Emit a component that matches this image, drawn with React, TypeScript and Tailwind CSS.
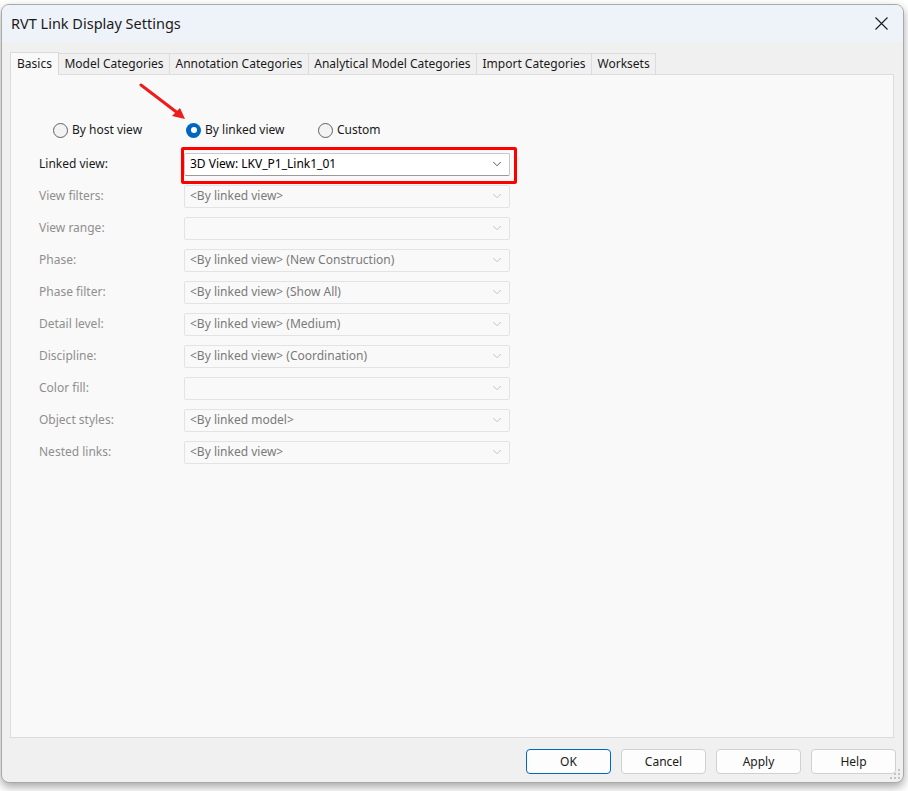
import { ChevronDown } from 'lucide-react';

const rows = [
  { label: 'View filters:', value: '<By linked view>' },
  { label: 'View range:', value: '' },
  { label: 'Phase:', value: '<By linked view> (New Construction)' },
  { label: 'Phase filter:', value: '<By linked view> (Show All)' },
  { label: 'Detail level:', value: '<By linked view> (Medium)' },
  { label: 'Discipline:', value: '<By linked view> (Coordination)' },
  { label: 'Color fill:', value: '' },
  { label: 'Object styles:', value: '<By linked model>' },
  { label: 'Nested links:', value: '<By linked view>' },
];

const tabs = [
  'Model Categories',
  'Annotation Categories',
  'Analytical Model Categories',
  'Import Categories',
  'Worksets',
];

function Radio({ label, checked }: { label: string; checked?: boolean }) {
  return (
    <div className="flex items-center gap-[4px]">
      {checked ? (
        <span className="w-[15px] h-[15px] rounded-full bg-[#0067c0] flex items-center justify-center">
          <span className="w-[6px] h-[6px] rounded-full bg-white" />
        </span>
      ) : (
        <span className="w-[15px] h-[15px] rounded-full border border-[#616161] bg-[#f3f3f3]" />
      )}
      <span className="text-[#1a1a1a]">{label}</span>
    </div>
  );
}

function App() {
  return (
    <div
      className="w-[908px] h-[791px] bg-white overflow-hidden text-[12px] text-black"
      style={{ fontFamily: '"Noto Sans", "Open Sans", sans-serif' }}
    >
      <div className="mt-[4px] ml-[1px] w-[903px] h-[779px] rounded-[8px] border border-[#a9a9a9] bg-[#f0f0f0] overflow-hidden shadow-[0_4px_10px_rgba(0,0,0,0.35)] flex flex-col relative">
        {/* Title bar */}
        <div className="h-[37px] bg-[#eef2f9] flex items-center justify-between pl-[9px] pr-[14px] shrink-0">
          <span className="text-[14.5px] text-[#1a1a1a]">RVT Link Display Settings</span>
          <svg width="13" height="13" viewBox="0 0 13 13" className="mr-[1px]">
            <path d="M0.5 0.5 L12.5 12.5 M12.5 0.5 L0.5 12.5" stroke="#1a1a1a" strokeWidth="1.1" />
          </svg>
        </div>

        {/* Tabs */}
        <div className="mt-[9px] pl-[8px] flex items-end h-[23px] shrink-0">
          <div className="h-[23px] px-[6px] bg-[#f9f9f9] border border-b-0 border-[#d9d9d9] flex items-center text-[#1a1a1a] relative z-10 -mb-[1px]">
            Basics
          </div>
          {tabs.map((t) => (
            <div
              key={t}
              className="h-[21px] px-[5.5px] bg-[#f0f0f0] border border-l-0 border-b-0 border-[#dcdcdc] flex items-center text-[#1a1a1a]"
            >
              {t}
            </div>
          ))}
        </div>

        {/* Panel */}
        <div className="ml-[8px] w-[884px] h-[664px] bg-[#f9f9f9] border border-[#dcdcdc] pt-[45px] pl-[28px] relative shrink-0">
          <svg className="absolute left-[128px] top-[8px]" width="50" height="40" viewBox="0 0 50 40">
            <path d="M2 2 L40 31" stroke="#ee1c1c" strokeWidth="3" strokeLinecap="round" />
            <path d="M46 36 L33 33 L41 25 Z" fill="#ee1c1c" />
          </svg>

          <div className="h-[20px] flex items-center pl-[14px]">
            <div className="w-[133px]">
              <Radio label="By host view" />
            </div>
            <div className="w-[132px]">
              <Radio label="By linked view" checked />
            </div>
            <Radio label="Custom" />
          </div>

          <div className="mt-[8px] flex flex-col">
            <div className="h-[32px] flex items-center">
              <span className="w-[145px] text-[#1a1a1a]">Linked view:</span>
              <div className="relative">
                <div className="w-[326px] h-[23px] bg-white border border-[#c8c8c8] border-b-[#9a9a9a] rounded-[2px] flex items-center justify-between pl-[5px] pr-[5px]">
                  <span>3D View: LKV_P1_Link1_01</span>
                  <ChevronDown className="w-[14px] h-[14px] text-[#333]" strokeWidth={1.4} />
                </div>
                <div className="absolute -left-[3px] -right-[7px] -top-[6px] -bottom-[8px] border-[3px] border-[#ff0000] rounded-[2px]" />
              </div>
            </div>
            {rows.map((r) => (
              <div key={r.label} className="h-[32px] flex items-center">
                <span className="w-[145px] text-[#8f8f8f]">{r.label}</span>
                <div className="w-[326px] h-[23px] bg-[#f9f9f9] border border-[#e3e3e3] rounded-[2px] flex items-center justify-between pl-[5px] pr-[5px]">
                  <span className="text-[#7a7a7a]">{r.value}</span>
                  <ChevronDown className="w-[14px] h-[14px] text-[#b5b5b5]" strokeWidth={1.4} />
                </div>
              </div>
            ))}
          </div>
        </div>

        {/* Buttons */}
        <div className="mt-[11px] flex justify-end gap-[10px] pr-[7px]">
          {['OK', 'Cancel', 'Apply', 'Help'].map((b) => (
            <button
              key={b}
              className={
                b === 'OK'
                  ? 'w-[85px] h-[25px] bg-[#fdfdfd] border border-[#0067c0] rounded-[4px] text-[#1a1a1a]'
                  : 'w-[85px] h-[25px] bg-[#fdfdfd] border border-[#d0d0d0] rounded-[4px] text-[#1a1a1a]'
              }
            >
              {b}
            </button>
          ))}
        </div>

        <svg className="absolute right-[2px] bottom-[2px]" width="12" height="12" viewBox="0 0 12 12">
          <rect x="9" y="1" width="2" height="2" fill="#c4c4c4" />
          <rect x="5" y="5" width="2" height="2" fill="#c4c4c4" />
          <rect x="9" y="5" width="2" height="2" fill="#c4c4c4" />
          <rect x="1" y="9" width="2" height="2" fill="#c4c4c4" />
          <rect x="5" y="9" width="2" height="2" fill="#c4c4c4" />
          <rect x="9" y="9" width="2" height="2" fill="#c4c4c4" />
        </svg>
      </div>
    </div>
  );
}

export default App;
